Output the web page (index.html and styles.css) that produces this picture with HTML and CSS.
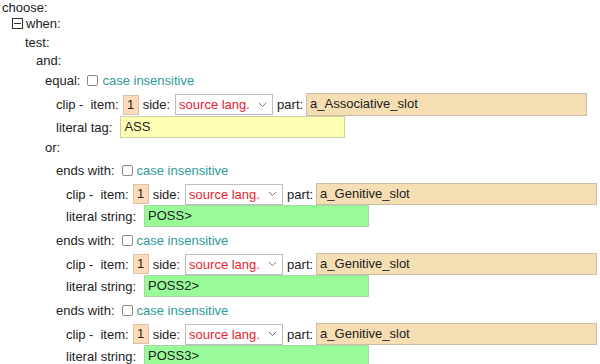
FILE: index.html
```html
<!DOCTYPE html>
<html>
<head>
<meta charset="utf-8">
<link rel="stylesheet" href="styles.css">
</head>
<body>
<div class="tree">
  <div class="row r-choose">choose:</div>
  <div class="kids k10">
    <div class="row r-when"><span class="toggle"><svg width="11" height="11" viewBox="0 0 11 11"><rect x="0.5" y="0.5" width="10" height="10" fill="#fff" stroke="#333"/><line x1="2" y1="5.5" x2="9" y2="5.5" stroke="#333"/></svg></span>when:</div>
    <div class="kids k13">
      <div class="row r-test">test:</div>
      <div class="kids k11">
        <div class="row r-and">and:</div>
        <div class="kids k9">
          <div class="row r-equal"><span class="lbl">equal:</span><span class="cb"></span><span class="ci">case insensitive</span></div>
          <div class="kids k11">
            <div class="row r-clip first">
              <span class="clip">clip -</span><span>item:</span><span class="num">1</span><span>side:</span>
              <span class="sel"><span class="sel-text">source lang.</span><svg class="chev" width="9" height="6" viewBox="0 0 9 6"><path d="M1 1l3.5 3.5L8 1" fill="none" stroke="#777" stroke-width="1"/></svg></span>
              <span>part:</span><span class="inp part">a_Associative_slot</span>
            </div>
            <div class="row r-lit"><span class="lit-lbl">literal tag:</span><span class="inp yellow">ASS</span></div>
          </div>
          <div class="row r-or">or:</div>
          <div class="kids k11">
            <div class="group">
              <div class="row r-ends"><span class="lbl">ends with:</span><span class="cb"></span><span class="ci">case insensitive</span></div>
              <div class="kids k10">
                <div class="row r-clip">
                  <span class="clip">clip -</span><span>item:</span><span class="num">1</span><span>side:</span>
                  <span class="sel"><span class="sel-text">source lang.</span><svg class="chev" width="9" height="6" viewBox="0 0 9 6"><path d="M1 1l3.5 3.5L8 1" fill="none" stroke="#777" stroke-width="1"/></svg></span>
                  <span>part:</span><span class="inp part">a_Genitive_slot</span>
                </div>
                <div class="row r-lit"><span class="lit-lbl">literal string:</span><span class="inp green">POSS&gt;</span></div>
              </div>
            </div>
            <div class="group">
              <div class="row r-ends"><span class="lbl">ends with:</span><span class="cb"></span><span class="ci">case insensitive</span></div>
              <div class="kids k10">
                <div class="row r-clip">
                  <span class="clip">clip -</span><span>item:</span><span class="num">1</span><span>side:</span>
                  <span class="sel"><span class="sel-text">source lang.</span><svg class="chev" width="9" height="6" viewBox="0 0 9 6"><path d="M1 1l3.5 3.5L8 1" fill="none" stroke="#777" stroke-width="1"/></svg></span>
                  <span>part:</span><span class="inp part">a_Genitive_slot</span>
                </div>
                <div class="row r-lit"><span class="lit-lbl">literal string:</span><span class="inp green">POSS2&gt;</span></div>
              </div>
            </div>
            <div class="group">
              <div class="row r-ends"><span class="lbl">ends with:</span><span class="cb"></span><span class="ci">case insensitive</span></div>
              <div class="kids k10">
                <div class="row r-clip">
                  <span class="clip">clip -</span><span>item:</span><span class="num">1</span><span>side:</span>
                  <span class="sel"><span class="sel-text">source lang.</span><svg class="chev" width="9" height="6" viewBox="0 0 9 6"><path d="M1 1l3.5 3.5L8 1" fill="none" stroke="#777" stroke-width="1"/></svg></span>
                  <span>part:</span><span class="inp part">a_Genitive_slot</span>
                </div>
                <div class="row r-lit"><span class="lit-lbl">literal string:</span><span class="inp green">POSS3&gt;</span></div>
              </div>
            </div>
          </div>
        </div>
      </div>
    </div>
  </div>
</div>
</body>
</html>
```
FILE: styles.css
```css
html, body {
  margin: 0;
  padding: 0;
  background: #fff;
}
body {
  font-family: "Liberation Sans", Arial, sans-serif;
  font-size: 13px;
  color: #222;
  overflow: hidden;
}
.tree {
  padding-left: 2px;
}
.kids.k9 { padding-left: 9px; }
.kids.k10 { padding-left: 10px; }
.kids.k11 { padding-left: 11px; }
.kids.k13 { padding-left: 13px; }

.row {
  display: flex;
  align-items: center;
  white-space: nowrap;
  line-height: 15px;
}
.r-choose { height: 15px; }
.r-when { height: 17px; }
.r-test { height: 20px; }
.r-and { height: 16px; }
.r-equal { height: 25px; }
.r-or { height: 19px; }
.r-ends { height: 26px; }
.r-clip { height: 22px; }
.r-clip.first { height: 23px; }
.r-lit { height: 22px; }

.toggle {
  display: inline-flex;
  width: 11px;
  height: 11px;
  margin-right: 3px;
}
.toggle svg { display: block; }

.lbl { margin-right: 7px; }
.cb {
  display: inline-block;
  box-sizing: border-box;
  width: 11px;
  height: 11px;
  border: 1px solid #8a8a8a;
  border-radius: 2px;
  background: #fff;
  margin-right: 4px;
}
.ci { color: #2f9a9a; }

.clip { margin-right: 7px; }
.num {
  box-sizing: border-box;
  width: 16px;
  height: 20px;
  margin: 0 4px;
  background: #ffdab9;
  border: 1px solid #d9c2ad;
  text-align: center;
  line-height: 18px;
}
.sel {
  box-sizing: border-box;
  display: inline-flex;
  align-items: center;
  justify-content: space-between;
  width: 98px;
  height: 21px;
  margin: 0 4px 0 5px;
  padding: 0 5px 0 3px;
  border: 1px solid #bdbdbd;
  background: #fff;
}
.sel-text { color: #e8222d; }
.chev { display: block; }
.inp {
  box-sizing: border-box;
  display: inline-block;
  height: 22px;
  line-height: 20px;
  padding: 0 3px;
  border: 1px solid #c2c2c2;
}
.inp.part {
  width: 281px;
  margin-left: 3px;
  background: #f5deb3;
  border-color: #c9bda6;
}
.r-clip.first .inp.part { height: 23px; }
.lit-lbl { margin-right: 8px; }
.inp.yellow {
  width: 225px;
  background: #ffffb3;
  border-color: #cfcfa6;
}
.inp.green {
  width: 225px;
  background: #98fb98;
  border-color: #a7d6a7;
}
```
